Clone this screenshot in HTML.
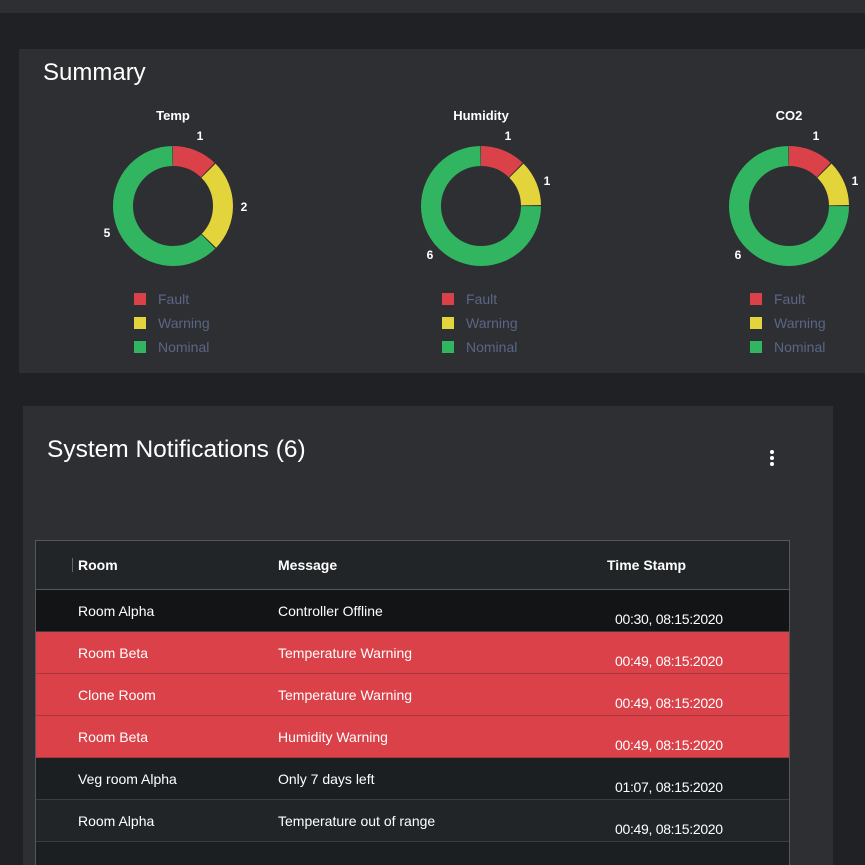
<!DOCTYPE html>
<html><head><meta charset="utf-8"><style>
*{margin:0;padding:0;box-sizing:border-box}
body{width:865px;height:865px;overflow:hidden;background:#202124;font-family:"Liberation Sans",Roboto,sans-serif;position:relative;color:#fff}
.abs{position:absolute}
.top{left:0;top:0;width:865px;height:13px;background:#2e2f33}
.sum{left:19px;top:49px;width:846px;height:324px;background:#2e2f33}
.sum h2{position:absolute;left:24px;top:10px;font-size:24px;font-weight:normal;color:#fff}
.notif{left:23px;top:406px;width:810px;height:459px;background:#2e2f33}
.notif h2{position:absolute;left:24px;top:30px;font-size:24.5px;font-weight:normal}
.dots{left:770px;top:450px}
.dots i{display:block;width:4px;height:4px;border-radius:2px;background:#fff;margin-bottom:2px}
.leg{font-size:14px;color:#5a6685}
.leg div{height:24px;position:relative}
.leg b{position:absolute;left:0;top:0;width:12px;height:12px}
.leg span{position:absolute;left:24px;top:-2px}
.tbl{left:35px;top:540px;width:755px;height:325px;border:1px solid #55575c;border-bottom:none;background:#1c1f21;font-family:"Liberation Sans Narrow","Liberation Sans",sans-serif;font-size:14px}
.row{position:absolute;left:0;width:753px;height:42px;border-bottom:1px solid #3a3c40}
.row span{position:absolute}
.c1{left:42px;top:13px}.c2{left:242px;top:13px}.c3{left:579px;top:21px;letter-spacing:-0.3px}
.hd{top:0;height:49px;background:#222528;border-bottom:1px solid #55575c;font-weight:bold}
.hd span{top:16px}
.red{background:#db4148;border-bottom-color:#a8363c}
</style></head><body>
<div class="abs top"></div>
<div class="abs sum"><h2>Summary</h2></div>

<svg class="abs" style="left:0;top:0" width="865" height="380">
<g font-family="Liberation Sans, sans-serif" font-size="12" fill="#fff" font-weight="bold" text-anchor="middle">
<text x="173" y="120" font-size="13">Temp</text>
<text x="481" y="120" font-size="13">Humidity</text>
<text x="789" y="120" font-size="13">CO2</text>
<text x="200" y="140">1</text><text x="244" y="211">2</text><text x="107" y="237">5</text>
<text x="508" y="140">1</text><text x="547" y="185">1</text><text x="430" y="259">6</text>
<text x="816" y="140">1</text><text x="855" y="185">1</text><text x="738" y="259">6</text>
</g>
<g fill="none" stroke-width="20">
<g transform="translate(173,206) rotate(-90)">
<circle r="50" stroke="#db4148" stroke-dasharray="38.3 400" stroke-dashoffset="0"/>
<circle r="50" stroke="#e2d43a" stroke-dasharray="77.5 400" stroke-dashoffset="-39.3"/>
<circle r="50" stroke="#32b561" stroke-dasharray="195.3 400" stroke-dashoffset="-117.8"/>
</g>
<g transform="translate(481,206) rotate(-90)">
<circle r="50" stroke="#db4148" stroke-dasharray="38.3 400" stroke-dashoffset="0"/>
<circle r="50" stroke="#e2d43a" stroke-dasharray="38.3 400" stroke-dashoffset="-39.3"/>
<circle r="50" stroke="#32b561" stroke-dasharray="234.6 400" stroke-dashoffset="-78.5"/>
</g>
<g transform="translate(789,206) rotate(-90)">
<circle r="50" stroke="#db4148" stroke-dasharray="38.3 400" stroke-dashoffset="0"/>
<circle r="50" stroke="#e2d43a" stroke-dasharray="38.3 400" stroke-dashoffset="-39.3"/>
<circle r="50" stroke="#32b561" stroke-dasharray="234.6 400" stroke-dashoffset="-78.5"/>
</g>
</g>
</svg>

<div class="abs leg" style="left:134px;top:293px"><div><b style="background:#db4148"></b><span>Fault</span></div><div><b style="background:#e2d43a"></b><span>Warning</span></div><div><b style="background:#32b561"></b><span>Nominal</span></div></div>
<div class="abs leg" style="left:442px;top:293px"><div><b style="background:#db4148"></b><span>Fault</span></div><div><b style="background:#e2d43a"></b><span>Warning</span></div><div><b style="background:#32b561"></b><span>Nominal</span></div></div>
<div class="abs leg" style="left:750px;top:293px"><div><b style="background:#db4148"></b><span>Fault</span></div><div><b style="background:#e2d43a"></b><span>Warning</span></div><div><b style="background:#32b561"></b><span>Nominal</span></div></div>

<div class="abs notif"><h2>System Notifications (6)</h2></div>
<div class="abs dots"><i></i><i></i><i></i></div>

<div class="abs tbl">
<div class="row hd"><span style="left:36px;top:17px;width:1px;height:14px;background:#666"></span><span class="c1" style="top:16px">Room</span><span class="c2" style="top:16px">Message</span><span style="left:571px;top:16px">Time Stamp</span></div>
<div class="row" style="top:49px;background:#121416"><span class="c1">Room Alpha</span><span class="c2">Controller Offline</span><span class="c3">00:30, 08:15:2020</span></div>
<div class="row red" style="top:91px"><span class="c1">Room Beta</span><span class="c2">Temperature Warning</span><span class="c3">00:49, 08:15:2020</span></div>
<div class="row red" style="top:133px"><span class="c1">Clone Room</span><span class="c2">Temperature Warning</span><span class="c3">00:49, 08:15:2020</span></div>
<div class="row red" style="top:175px"><span class="c1">Room Beta</span><span class="c2">Humidity Warning</span><span class="c3">00:49, 08:15:2020</span></div>
<div class="row" style="top:217px;background:#1c1f21"><span class="c1">Veg room Alpha</span><span class="c2">Only 7 days left</span><span class="c3">01:07, 08:15:2020</span></div>
<div class="row" style="top:259px;background:#222528"><span class="c1">Room Alpha</span><span class="c2">Temperature out of range</span><span class="c3">00:49, 08:15:2020</span></div>
</div>
</body></html>
